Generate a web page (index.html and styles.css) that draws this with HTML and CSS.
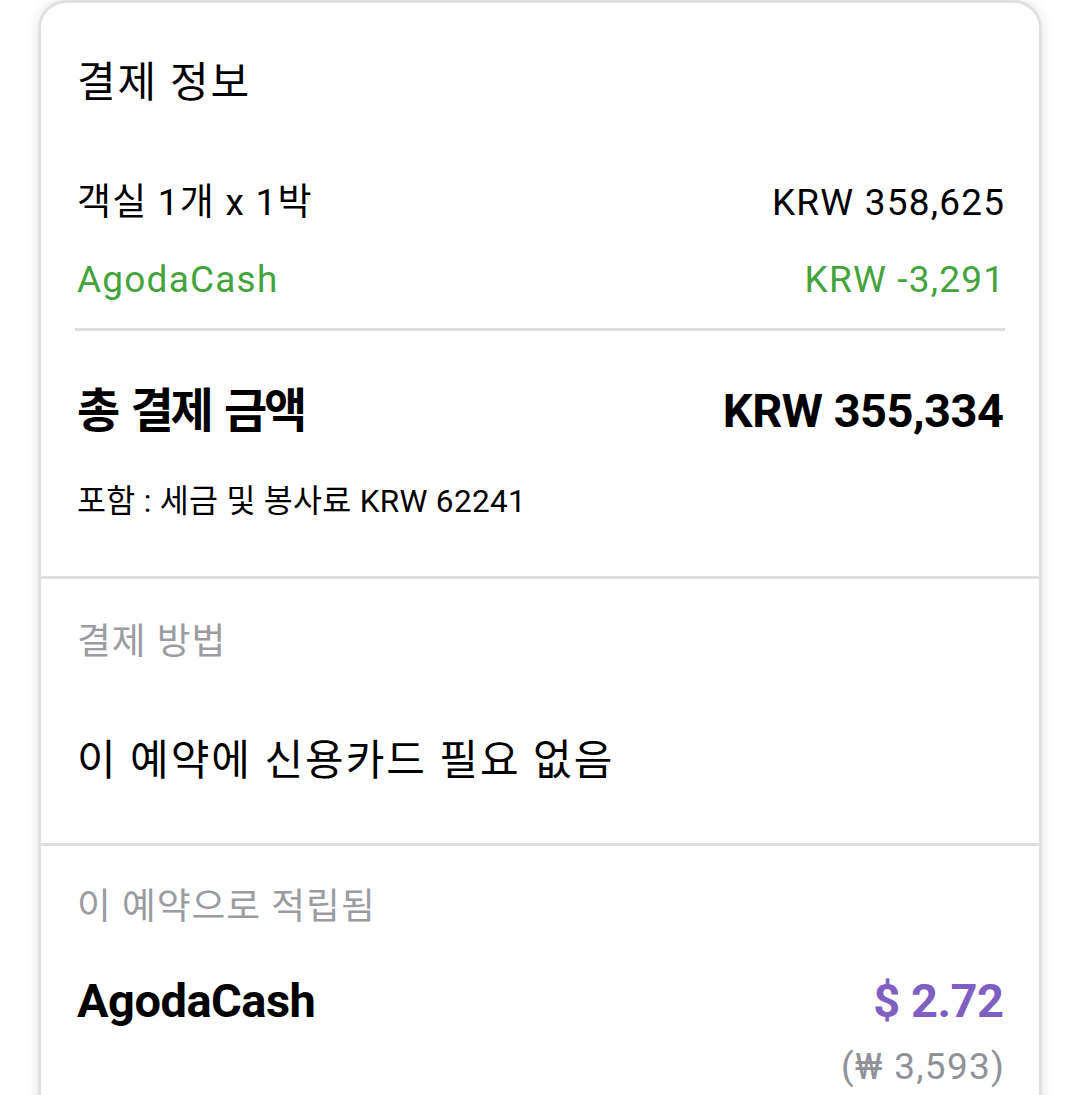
FILE: index.html
```html
<!DOCTYPE html>
<html lang="ko">
<head>
<meta charset="utf-8">
<link rel="stylesheet" href="styles.css">
</head>
<body>
<div class="card">
  <section class="section s1">
    <h1 class="title">결제 정보</h1>
    <div class="row row-first">
      <span>객실 1개 x 1박</span>
      <span>KRW 358,625</span>
    </div>
    <div class="row row-green">
      <span>AgodaCash</span>
      <span>KRW -3,291</span>
    </div>
    <div class="divider"></div>
    <div class="row total">
      <span class="ko-bold">총 결제 금액</span>
      <span>KRW 355,334</span>
    </div>
    <div class="note">포함 : 세금 및 봉사료 KRW 62241</div>
  </section>
  <section class="section s2">
    <div class="label">결제 방법</div>
    <div class="method">이 예약에 신용카드 필요 없음</div>
  </section>
  <section class="section s3">
    <div class="label">이 예약으로 적립됨</div>
    <div class="row total cash">
      <span>AgodaCash</span>
      <span class="purple">$ 2.72</span>
    </div>
    <div class="sub">(₩ 3,593)</div>
  </section>
</div>
</body>
</html>
```
FILE: styles.css
```css
html, body {
  margin: 0;
  padding: 0;
  background: #ffffff;
}
body {
  font-family: Roboto, "Noto Sans CJK KR", sans-serif;
  color: #000000;
  height: 1095px;
  overflow: hidden;
}
.card {
  margin-left: 38px;
  width: 998px;
  border: 3px solid #e1e1e3;
  border-bottom: none;
  border-radius: 28px 28px 0 0;
  box-shadow: 0 0 14px rgba(0, 0, 0, 0.1);
  background: #ffffff;
  min-height: 1200px;
}
.section {
  padding: 0 35px 0 36px;
}
.s1 {
  padding-top: 50px;
  padding-bottom: 54px;
  border-bottom: 3px solid #dedede;
}
.title {
  margin: 0;
  font-size: 42px;
  font-weight: 400;
  line-height: 60px;
  letter-spacing: 1.8px;
}
.row {
  display: flex;
  justify-content: space-between;
  align-items: baseline;
  font-size: 37px;
  line-height: 50px;
  letter-spacing: 1.2px;
}
.row > span:last-child {
  margin-right: -1.2px;
}
.row-first {
  margin-top: 65px;
}
.row-green {
  margin-top: 27px;
  color: #43a33c;
}
.divider {
  height: 3px;
  background: #dedede;
  margin-top: 23px;
  margin-left: -2px;
  margin-right: -1px;
}
.total {
  font-size: 47px;
  font-weight: 700;
  line-height: 60px;
  margin-top: 50px;
  letter-spacing: -0.5px;
}
.total > span:last-child {
  margin-right: 0.5px;
}
.ko-bold {
  letter-spacing: -3.2px;
  word-spacing: 5px;
}
.note {
  font-size: 31.5px;
  line-height: 40px;
  margin-top: 41px;
  letter-spacing: 0.3px;
}
.s2 {
  padding-top: 38px;
  padding-bottom: 52px;
  border-bottom: 3px solid #dedede;
}
.label {
  font-size: 36.75px;
  line-height: 50px;
  color: #9a9ca1;
  letter-spacing: 1px;
}
.method {
  font-size: 42px;
  line-height: 60px;
  margin-top: 64px;
  letter-spacing: 2px;
}
.s3 {
  padding-top: 36px;
}
.cash {
  margin-top: 39px;
}
.purple {
  color: #7f5fc2;
}
.sub {
  text-align: right;
  font-size: 37px;
  line-height: 50px;
  color: #909298;
  margin-top: 11px;
  letter-spacing: 1.3px;
  margin-right: -1.3px;
}
```
